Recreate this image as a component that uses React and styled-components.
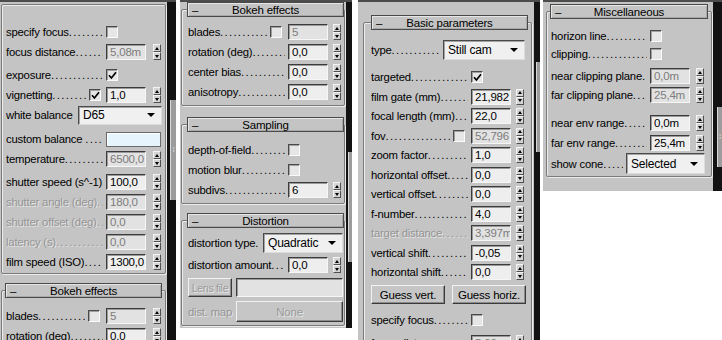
import React from "react";
import styled, { createGlobalStyle } from "styled-components";

const GlobalStyle = createGlobalStyle`
  html, body {
    margin: 0;
    padding: 0;
    background: #ffffff;
  }
  body {
    font-family: "Liberation Sans", Arial, sans-serif;
    font-size: 11px;
    letter-spacing: -0.2px;
    color: #000;
  }
`;

const DOTS = "........................................";

const Page = styled.div`
  display: flex;
  align-items: flex-start;
  width: 722px;
  height: 340px;
  overflow: hidden;
  background: #fff;
`;

const Column = styled.div`
  display: flex;
  flex: none;
  box-sizing: border-box;
  width: ${(p) => p.$w}px;
  height: ${(p) => p.$h}px;
  margin-left: ${(p) => p.$ml || 0}px;
  background: #c4c4c4;
  border-top: 2px solid #4c4c4c;
  overflow: hidden;
`;

const Panel = styled.div`
  flex: 1;
  min-width: 0;
  display: flex;
  flex-direction: column;
  padding: 0 ${(p) => p.$pr}px 0 ${(p) => p.$pl}px;
`;

const Scrollbar = styled.div`
  flex: none;
  width: ${(p) => p.$w}px;
  background: #121212;
  display: flex;
  flex-direction: column;
  align-items: flex-end;
`;

const Thumb = styled.div`
  width: ${(p) => p.$w}px;
  height: ${(p) => p.$h}px;
  margin-top: ${(p) => p.$top}px;
  background: #9c9c9c;
  border-left: 1px solid #d8d8d8;
  display: flex;
  align-items: center;
  justify-content: center;
  color: #e8e8e8;
  font-size: 8px;
  line-height: 4px;
  letter-spacing: 0;
`;

const Rollout = styled.div`
  flex: none;
  display: flex;
  flex-direction: column;
  margin-top: ${(p) => p.$mt}px;
  padding: 0 ${(p) => p.$pr}px ${(p) => p.$pb}px ${(p) => p.$pl}px;
  border: 1px solid #7a7a7a;
  border-radius: 2px;
  box-shadow: inset 1px 1px 0 #ececec, 1px 1px 0 #ececec;
`;

const Header = styled.div`
  flex: none;
  display: flex;
  align-items: center;
  box-sizing: border-box;
  height: 15px;
  margin: -8px ${(p) => p.$mr}px 0 ${(p) => p.$ml}px;
  background: #c4c4c4;
  border: 1px solid #4a4a4a;
  box-shadow: inset 1px 1px 0 #e6e6e6, inset -1px -1px 0 #a8a8a8;
  font-size: 11.5px;
`;

const Dash = styled.span`
  width: 16px;
  padding-left: 4px;
`;

const Title = styled.span`
  flex: 1;
  text-align: center;
  margin-right: 20px;
`;

const Row = styled.div`
  flex: none;
  display: flex;
  align-items: center;
  height: ${(p) => p.$h || 20}px;
  margin-top: ${(p) => p.$mt || 0}px;
`;

const Label = styled.span`
  flex: 1;
  min-width: 0;
  overflow: hidden;
  white-space: nowrap;
  margin-right: 3px;
  font-size: 11.3px;
  color: ${(p) => (p.$off ? "#959595" : "#000")};
  text-shadow: ${(p) => (p.$off ? "1px 1px 0 #e4e4e4" : "none")};
`;

const Dots = styled.span`
  letter-spacing: 1.3px;
`;

const Gap = styled.span`
  flex: 1;
`;

const Slot = styled.div`
  flex: none;
  display: flex;
  align-items: center;
  justify-content: space-between;
  width: ${(p) => p.$w}px;
`;

const Field = styled.div`
  flex: none;
  box-sizing: border-box;
  width: ${(p) => p.$w || 40}px;
  height: ${(p) => p.$h || 16}px;
  margin: 0 ${(p) => p.$mr || 0}px 0 ${(p) => p.$ml || 0}px;
  padding-left: 3px;
  line-height: 14px;
  background: ${(p) => (p.$off ? "#e2e2e2" : "#eeeeee")};
  border: 1px solid;
  border-color: #3c3c3c #f6f6f6 #f6f6f6 #3c3c3c;
  box-shadow: inset 1px 1px 0 #9a9a9a;
  color: ${(p) => (p.$off ? "#7c7c7c" : "#000")};
  font-size: 11.5px;
  white-space: nowrap;
  overflow: hidden;
`;

const SpinBox = styled.div`
  flex: none;
  display: flex;
  flex-direction: column;
  width: 8px;
  height: 16px;
`;

const SpinHalf = styled.div`
  flex: 1;
  display: flex;
  align-items: center;
  justify-content: center;
  box-sizing: border-box;
  background: #d4d4d4;
  border: 1px solid;
  border-color: #f4f4f4 #505050 #505050 #f4f4f4;
`;

const Tri = styled.span`
  width: 0;
  height: 0;
  border-left: 2px solid transparent;
  border-right: 2px solid transparent;
  ${(p) =>
    p.$down ? "border-top: 3px solid #000;" : "border-bottom: 3px solid #000;"}
`;

const Check = styled.div`
  flex: none;
  box-sizing: border-box;
  width: 12px;
  height: 12px;
  margin-right: ${(p) => p.$mr || 0}px;
  background: #e6e6e6;
  border: 1px solid;
  border-color: #4a4a4a #fafafa #fafafa #4a4a4a;
  box-shadow: inset 1px 1px 0 #a0a0a0;
  display: flex;
  align-items: center;
  justify-content: center;
`;

const Dropdown = styled.div`
  flex: none;
  display: flex;
  align-items: center;
  justify-content: space-between;
  box-sizing: border-box;
  width: ${(p) => p.$w}px;
  height: ${(p) => p.$h || 19}px;
  margin-right: ${(p) => p.$mr || 0}px;
  padding: 0 6px 0 4px;
  background: #f0f0f0;
  border: 1px solid;
  border-color: #4a4a4a #dcdcdc #dcdcdc #4a4a4a;
  box-shadow: inset 1px 1px 0 #a4a4a4;
  font-size: 12px;
`;

const DropArrow = styled.span`
  width: 0;
  height: 0;
  border-left: 4px solid transparent;
  border-right: 4px solid transparent;
  border-top: 4px solid #000;
`;

const Swatch = styled.div`
  flex: none;
  box-sizing: border-box;
  width: 55px;
  height: 15px;
  background: #e6f4fd;
  border: 1px solid #6a6a6a;
  box-shadow: inset 1px 1px 0 #ffffff;
`;

const Bevel = styled.div`
  flex: none;
  display: flex;
  align-items: center;
  justify-content: center;
  box-sizing: border-box;
  width: ${(p) => p.$w}px;
  height: ${(p) => p.$h || 19}px;
  margin: 0 ${(p) => p.$mr || 0}px 0 ${(p) => p.$ml || 0}px;
  background: #c6c6c6;
  border: 1px solid;
  border-color: #f2f2f2 #3a3a3a #3a3a3a #f2f2f2;
  box-shadow: inset -1px -1px 0 #8c8c8c;
  color: ${(p) => (p.$off ? "#9a9a9a" : "#000")};
  text-shadow: ${(p) => (p.$off ? "1px 1px 0 #e6e6e6" : "none")};
  font-size: ${(p) => p.$fs || 11.5}px;
  letter-spacing: ${(p) => p.$ls || -0.2}px;
  white-space: nowrap;
`;

const Spinner = () => (
  <SpinBox>
    <SpinHalf>
      <Tri />
    </SpinHalf>
    <SpinHalf>
      <Tri $down />
    </SpinHalf>
  </SpinBox>
);

const Tick = () => (
  <svg width="9" height="9" viewBox="0 0 9 9">
    <path d="M1 4.2 L3.4 7 L8 1.2" fill="none" stroke="#000" strokeWidth="1.7" />
  </svg>
);

const Box = ({ on, mr }) => <Check $mr={mr}>{on ? <Tick /> : null}</Check>;

const Text = ({ children, off, plain }) => (
  <Label $off={off}>
    {children}
    {plain ? null : <Dots>{DOTS}</Dots>}
  </Label>
);

const SpinRow = ({ label, value, off, labelOff, pre, slot, h, mt }) => (
  <Row $h={h} $mt={mt}>
    <Text off={labelOff}>{label}</Text>
    {pre !== undefined ? <Box on={pre} mr={pre ? 5 : 6} /> : null}
    <Slot $w={slot}>
      <Field $off={off}>{value}</Field>
      <Spinner />
    </Slot>
  </Row>
);

const CheckRow = ({ label, on, slot, h, mt }) => (
  <Row $h={h} $mt={mt}>
    <Text>{label}</Text>
    <Slot $w={slot}>
      <Box on={on} />
    </Slot>
  </Row>
);

const RollHeader = ({ title, ml, mr }) => (
  <Header $ml={ml} $mr={mr}>
    <Dash>–</Dash>
    <Title>{title}</Title>
  </Header>
);

function CameraColumn() {
  const s = 55;
  return (
    <Column $w={176} $h={340}>
      <Panel $pl={1} $pr={1}>
        <Rollout $mt={2} $pl={4} $pr={4} $pb={1}>
          <CheckRow label="specify focus" on={false} slot={s} mt={17} />
          <SpinRow label="focus distance" value="5,08m" off slot={s} />
          <CheckRow label="exposure" on slot={s} mt={3} />
          <SpinRow label="vignetting" value="1,0" pre slot={s} />
          <Row>
            <Text plain>white balance</Text>
            <Dropdown $w={84} $mr={-1}>
              D65
              <DropArrow />
            </Dropdown>
          </Row>
          <Row $mt={4}>
            <Text>custom balance </Text>
            <Swatch />
          </Row>
          <SpinRow label="temperature" value="6500,0" off slot={s} />
          <SpinRow label="shutter speed (s^-1)" value="100,0" slot={s} mt={3} />
          <SpinRow label="shutter angle (deg)" value="180,0" off labelOff slot={s} />
          <SpinRow label="shutter offset (deg)" value="0,0" off labelOff slot={s} />
          <SpinRow label="latency (s)" value="0,0" off labelOff slot={s} />
          <SpinRow label="film speed (ISO)" value="1300,0" slot={s} />
        </Rollout>
        <Rollout $mt={16} $pl={4} $pr={4} $pb={2}>
          <RollHeader title="Bokeh effects" ml={-1} mr={-1} />
          <SpinRow label="blades" value="5" off pre={false} slot={s} mt={8} />
          <SpinRow label="rotation (deg)" value="0,0" slot={s} />
        </Rollout>
      </Panel>
      <Scrollbar $w={9}>
        <Thumb $w={5} $h={100} $top={98}>
          ⁞
        </Thumb>
      </Scrollbar>
    </Column>
  );
}

function EffectsColumn() {
  const s = 53;
  return (
    <Column $w={172} $h={328} $ml={4}>
      <Panel $pl={1} $pr={1}>
        <Rollout $mt={7} $pl={6} $pr={3} $pb={3}>
          <RollHeader title="Bokeh effects" ml={-1} mr={-3} />
          <SpinRow label="blades" value="5" off pre={false} slot={s} mt={5} />
          <SpinRow label="rotation (deg)" value="0,0" slot={s} />
          <SpinRow label="center bias" value="0,0" slot={s} />
          <SpinRow label="anisotropy" value="0,0" slot={s} />
        </Rollout>
        <Rollout $mt={18} $pl={6} $pr={3} $pb={3}>
          <RollHeader title="Sampling" ml={-1} mr={-3} />
          <CheckRow label="depth-of-field" on={false} slot={s} mt={8} />
          <CheckRow label="motion blur" on={false} slot={s} />
          <SpinRow label="subdivs" value="6" slot={s} />
        </Rollout>
        <Rollout $mt={16} $pl={6} $pr={3} $pb={3}>
          <RollHeader title="Distortion" ml={-1} mr={-3} />
          <Row $mt={5}>
            <Text>distortion type</Text>
            <Dropdown $w={80} $h={20} $mr={-2}>
              Quadratic
              <DropArrow />
            </Dropdown>
          </Row>
          <SpinRow label="distortion amount" value="0,0" slot={s} mt={2} />
          <Row $h={19} $mt={3}>
            <Bevel $w={44} $fs={10.5} $ls={-0.3} $off>
              Lens file
            </Bevel>
            <Gap />
            <Field $w={107} $h={19} $mr={-2} $off />
          </Row>
          <Row $h={21} $mt={4}>
            <Text off plain>
              dist. map
            </Text>
            <Bevel $w={107} $h={21} $mr={-2} $off>
              None
            </Bevel>
          </Row>
        </Rollout>
      </Panel>
      <Scrollbar $w={6}>
        <Thumb $w={3} $h={110} $top={150} />
      </Scrollbar>
    </Column>
  );
}

function BasicColumn() {
  const s = 53;
  return (
    <Column $w={182} $h={340} $ml={6}>
      <Panel $pl={5} $pr={2}>
        <Rollout $mt={20} $pl={7} $pr={7} $pb={0}>
          <RollHeader title="Basic parameters" ml={0} mr={-4} />
          <Row $mt={10}>
            <Text>type</Text>
            <Dropdown $w={82} $h={20} $mr={-1}>
              Still cam
              <DropArrow />
            </Dropdown>
          </Row>
          <CheckRow label="targeted" on slot={s} mt={7} />
          <SpinRow label="film gate (mm)" value="21,982" slot={s} h={19.5} />
          <SpinRow label="focal length (mm)" value="22,0" slot={s} h={19.5} />
          <SpinRow label="fov" value="52,796" off pre={false} slot={s} h={19.5} />
          <SpinRow label="zoom factor" value="1,0" slot={s} h={19.5} />
          <SpinRow label="horizontal offset" value="0,0" slot={s} h={19.5} />
          <SpinRow label="vertical offset" value="0,0" slot={s} h={19.5} />
          <SpinRow label="f-number" value="4,0" slot={s} h={19.5} />
          <SpinRow label="target distance" value="3,397m" off labelOff slot={s} h={19.5} />
          <SpinRow label="vertical shift" value="-0,05" slot={s} h={19.5} />
          <SpinRow label="horizontal shift" value="0,0" slot={s} h={19.5} />
          <Row $h={19} $mt={3}>
            <Bevel $w={74}>Guess vert.</Bevel>
            <Gap />
            <Bevel $w={74} $mr={-2}>
              Guess horiz.
            </Bevel>
          </Row>
          <CheckRow label="specify focus" on={false} slot={s} mt={6} />
          <SpinRow label="focus distance" value="5,08m" off slot={s} mt={3} />
        </Rollout>
      </Panel>
      <Scrollbar $w={6}>
        <Thumb $w={3} $h={90} $top={60} />
      </Scrollbar>
    </Column>
  );
}

function MiscColumn() {
  const s = 54;
  return (
    <Column $w={179} $h={191} $ml={3}>
      <Panel $pl={3} $pr={1}>
        <Rollout $mt={9} $pl={4} $pr={7} $pb={2}>
          <RollHeader title="Miscellaneous" ml={-1} mr={-4} />
          <CheckRow label="horizon line" on={false} slot={s} h={18} mt={8} />
          <CheckRow label="clipping" on={false} slot={s} h={18} />
          <SpinRow label="near clipping plane" value="0,0m" off slot={s} mt={3} />
          <SpinRow label="far clipping plane" value="25,4m" off slot={s} h={18} />
          <SpinRow label="near env range" value="0,0m" slot={s} mt={9} />
          <SpinRow label="far env range" value="25,4m" slot={s} />
          <Row $h={21}>
            <Text>show cone</Text>
            <Dropdown $w={79} $h={21} $mr={-1}>
              Selected
              <DropArrow />
            </Dropdown>
          </Row>
        </Rollout>
      </Panel>
      <Scrollbar $w={9}>
        <Thumb $w={4} $h={60} $top={105}>
          ⁞
        </Thumb>
      </Scrollbar>
    </Column>
  );
}

export default function App() {
  return (
    <>
      <GlobalStyle />
      <Page>
        <CameraColumn />
        <EffectsColumn />
        <BasicColumn />
        <MiscColumn />
      </Page>
    </>
  );
}
